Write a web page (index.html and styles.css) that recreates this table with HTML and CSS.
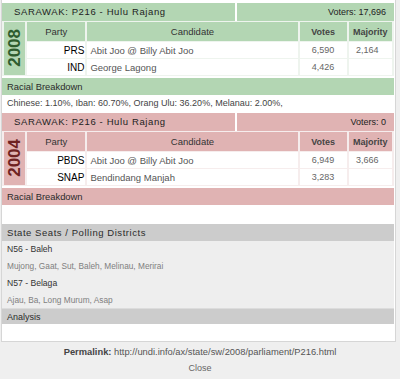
FILE: index.html
```html
<!DOCTYPE html>
<html>
<head>
<meta charset="utf-8">
<link rel="stylesheet" href="styles.css">
</head>
<body>
<div class="popup">
  <section class="block green">
    <div class="bar-row">
      <div class="bar title">SARAWAK: P216 - Hulu Rajang</div>
      <div class="bar voters">Voters: 17,696</div>
    </div>
    <table class="results">
      <colgroup><col class="w-year"><col class="w-party"><col class="w-cand"><col class="w-votes"><col class="w-maj"></colgroup>
      <tr class="head">
        <th class="year" rowspan="3"><span>2008</span></th>
        <th>Party</th><th>Candidate</th><th class="strong">Votes</th><th class="strong">Majority</th>
      </tr>
      <tr><td class="party">PRS</td><td class="cand"><span class="name">Abit Joo &#64; Billy Abit Joo</span></td><td class="num">6,590</td><td class="num maj">2,164</td></tr>
      <tr><td class="party">IND</td><td class="cand"><span class="name">George Lagong</span></td><td class="num">4,426</td><td class="num maj"></td></tr>
    </table>
    <div class="bar sub">Racial Breakdown</div>
    <div class="body">Chinese: 1.10%, Iban: 60.70%, Orang Ulu: 36.20%, Melanau: 2.00%,</div>
  </section>

  <section class="block pink">
    <div class="bar-row">
      <div class="bar title">SARAWAK: P216 - Hulu Rajang</div>
      <div class="bar voters">Voters: 0</div>
    </div>
    <table class="results">
      <colgroup><col class="w-year"><col class="w-party"><col class="w-cand"><col class="w-votes"><col class="w-maj"></colgroup>
      <tr class="head">
        <th class="year" rowspan="3"><span>2004</span></th>
        <th>Party</th><th>Candidate</th><th class="strong">Votes</th><th class="strong">Majority</th>
      </tr>
      <tr><td class="party">PBDS</td><td class="cand"><span class="name">Abit Joo &#64; Billy Abit Joo</span></td><td class="num">6,949</td><td class="num maj">3,666</td></tr>
      <tr><td class="party">SNAP</td><td class="cand"><span class="name">Bendindang Manjah</span></td><td class="num">3,283</td><td class="num maj"></td></tr>
    </table>
    <div class="bar sub">Racial Breakdown</div>
    <div class="body tall"></div>
  </section>

  <section class="block grey">
    <div class="bar sub seats-title">State Seats / Polling Districts</div>
    <div class="seats">
      <div class="seat">N56 - Baleh</div>
      <div class="districts">Mujong, Gaat, Sut, Baleh, Melinau, Merirai</div>
      <div class="seat">N57 - Belaga</div>
      <div class="districts">Ajau, Ba, Long Murum, Asap</div>
    </div>
    <div class="bar sub analysis">Analysis</div>
    <div class="body tall"></div>
  </section>
</div>
<div class="footer">
  <div class="permalink"><b>Permalink:</b> http://undi.info/ax/state/sw/2008/parliament/P216.html</div>
  <div class="close">Close</div>
</div>
</body>
</html>
```

FILE: styles.css
```css
html, body {
  margin: 0;
  padding: 0;
  background: #efefef;
  font-family: "Liberation Sans", Arial, sans-serif;
  font-size: 9px;
  color: #333;
}

.popup {
  margin: 0 4px 0 1px;
  border: 1px solid #d6d6d6;
  border-top: 0;
  background: #fff;
  padding: 3px 1px 0 0;
}

.block {
  margin-bottom: 2px;
}
.block.grey {
  margin-bottom: 0;
}

.bar-row {
  display: flex;
  gap: 2px;
}

.bar {
  box-sizing: border-box;
  height: 18px;
  line-height: 18px;
  padding: 0 4px;
  color: #2b2b2b;
}
.green .bar, .green th { background: #b3d6b3; }
.pink .bar, .pink th { background: #e0b3b3; }
.grey .bar { background: #cccccc; }

.title {
  width: 233px;
  padding-left: 12px;
  font-size: 9.5px;
  letter-spacing: 0.62px;
  color: #222;
}
.voters {
  flex: 1;
  text-align: right;
  padding-right: 8px;
  color: #222;
}

.results {
  table-layout: fixed;
  width: 392px;
  border-collapse: separate;
  border-spacing: 2px 1px;
  margin: 0;
}
.green .results { background: #eef4ee; }
.pink .results { background: #f6eded; }

.w-year { width: 21px; }
.w-party { width: 58px; }
.w-cand { width: 209px; }
.w-votes { width: 47px; }
.w-maj { width: 43px; }

th {
  font-weight: normal;
  height: 19px;
  padding: 0;
  font-size: 9.5px;
  color: #333;
}
th.strong {
  font-weight: bold;
  font-size: 9px;
  color: #444;
}

th.year {
  padding: 0;
  vertical-align: middle;
}
th.year span {
  display: inline-block;
  writing-mode: vertical-rl;
  transform: rotate(180deg);
  font-size: 17px;
  font-weight: bold;
  line-height: 20px;
}
.green th.year span { color: #2e5c2e; }
.pink th.year span { color: #6e2222; }

td {
  background: #fff;
  height: 16px;
  padding: 0;
  color: #666;
}
td.party {
  text-align: right;
  padding-right: 1px;
  font-size: 10px;
  color: #000;
}
td.cand {
  padding-left: 3px;
  font-size: 9.5px;
  color: #555;
}
.cand .name {
  color: #555;
  text-decoration: none;
}
td.num {
  text-align: center;
}
td.maj {
  padding-right: 6px;
}

.bar.sub {
  height: 17px;
  line-height: 17px;
  padding-left: 5px;
  margin-top: 2px;
  font-size: 9.4px;
}
.grey .bar.sub {
  margin-top: 0;
}
.bar.seats-title {
  letter-spacing: 0.55px;
  font-size: 9.5px;
}
.grey .bar.analysis {
  border-top: 1px solid #dcdcdc;
  height: 16px;
  line-height: 16px;
  font-size: 9px;
}

.body {
  height: 16px;
  line-height: 16px;
  padding-left: 5px;
  background: #fff;
  color: #444;
}
.body.tall {
  height: 17px;
}

.seats {
  background: #eeeeee;
  padding: 0 5px;
  height: 67px;
}
.seat {
  line-height: 17px;
  font-size: 8.6px;
  color: #333;
}
.districts {
  line-height: 17px;
  font-size: 8.3px;
  color: #808080;
}

.footer {
  text-align: center;
  padding-top: 3px;
}
.permalink {
  line-height: 15px;
  font-size: 9.35px;
  color: #555;
}
.permalink b {
  color: #444;
}
.close {
  line-height: 16px;
  color: #666;
}
```
